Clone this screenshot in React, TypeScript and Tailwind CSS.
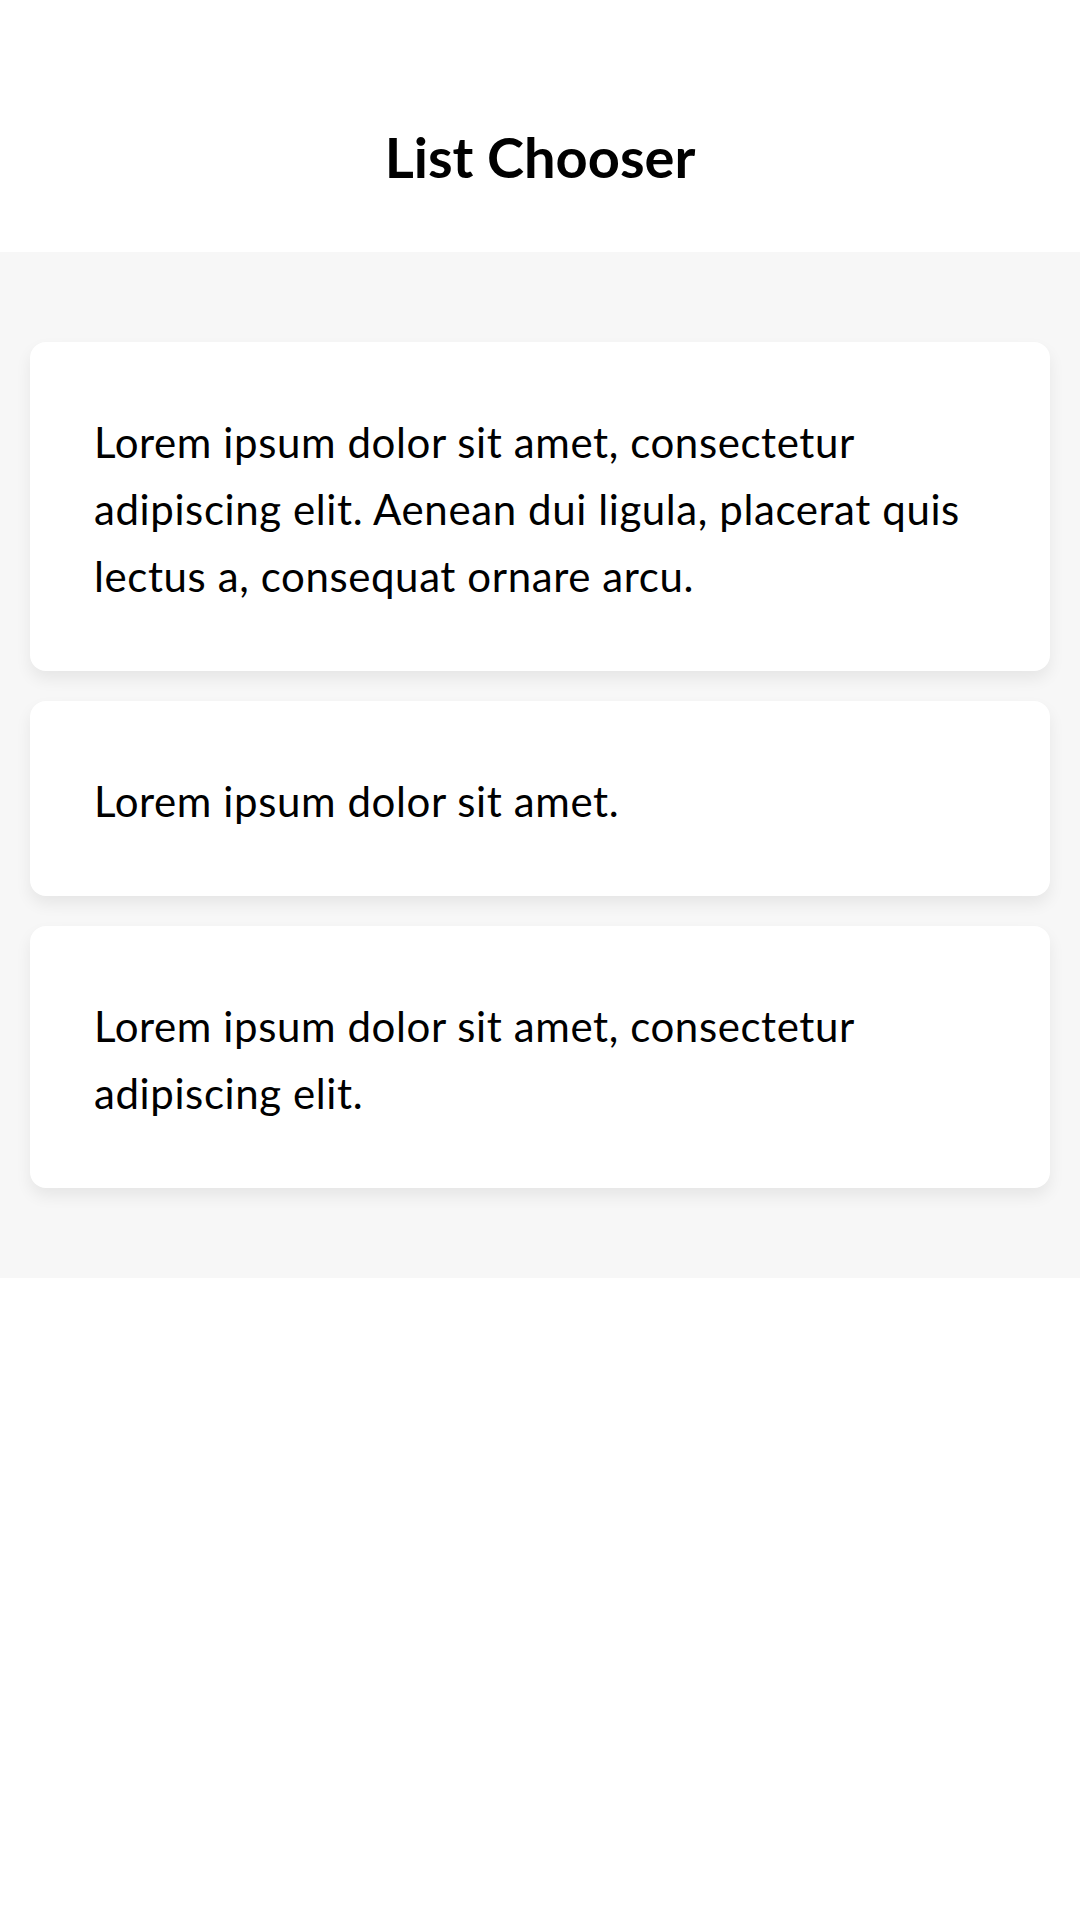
import React from "react";

const items = [
  "Lorem ipsum dolor sit amet, consectetur adipiscing elit. Aenean dui ligula, placerat quis lectus a, consequat ornare arcu.",
  "Lorem ipsum dolor sit amet.",
  "Lorem ipsum dolor sit amet, consectetur adipiscing elit.",
];

const App = () => {
  return (
    <div className="min-h-[1920px] bg-white font-['Lato',sans-serif] text-black">
      <div className="header h-[252px] pt-[129px] text-center">
        <h1 className="text-[56px] leading-none font-bold">List Chooser</h1>
      </div>
      <div className="list bg-[#f7f7f7] px-[30px] py-[90px] flex flex-col gap-[30px]">
        {items.map((text, i) => (
          <div
            key={i}
            className="card bg-white rounded-2xl px-16 pt-[67px] pb-[61px] shadow-[0_8px_16px_rgba(0,0,0,0.07)]"
          >
            <p className="text-[42px] leading-[67px] tracking-[0.6px]">{text}</p>
          </div>
        ))}
      </div>
    </div>
  );
};
export default App;
